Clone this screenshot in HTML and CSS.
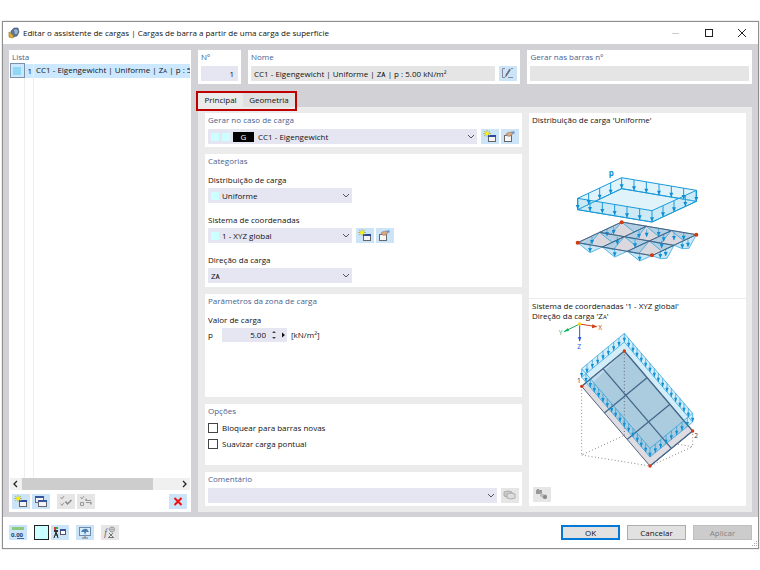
FILE: index.html
```html
<!DOCTYPE html>
<html lang="pt">
<head>
	<meta charset="UTF-8">
	<meta name="viewport" content="width=device-width, initial-scale=1.0">
	<title>Editar o assistente de cargas</title>
	<link rel="stylesheet" href="styles.css">
</head>
<body>
	<svg class="defs" aria-hidden="true">
		<symbol id="i-new" viewBox="0 0 18 15">
			<rect x="7.5" y="6.5" width="7" height="6" fill="#f4f4f4" stroke="#666"/>
			<path d="M7 6h8v2H7z" fill="#2b4a9b"/>
			<path d="M6 1v7M2 4.5h8M3 2l6 5M9 2L3 7" stroke="#a3a637" stroke-width=".7"/>
			<circle cx="6" cy="4.5" r="1.800" fill="#fff200"/>
		</symbol>
		<symbol id="i-edit" viewBox="0 0 18 15">
			<rect x="3.5" y="6.5" width="7" height="6" fill="#f6f6f6" stroke="#666"/>
			<path d="M3 6h8v1H3z" fill="#6c6c7c"/>
			<path d="M5 6l1-2 4-1 2 1-1 2-3 1.500z" fill="#d9a984" stroke="#8a6a50" stroke-width=".5"/>
			<path d="M10 3l3-1 1 2.500-3 0z" fill="#6f95d0"/>
		</symbol>
		<symbol id="i-down" viewBox="0 0 8 6">
			<path d="M1 1l3 3 3-3" fill="none" stroke="#555"/>
		</symbol>
	</svg>

	<div class="window">
		<header class="titlebar">
			<svg class="app-icon" viewBox="0 0 12 12" aria-hidden="true">
				<path d="M3 4l3-3 4 0 1 4-2 4-4 1-2-3z" fill="#5d7698" stroke="#3a4f70" stroke-width=".6"/>
				<path d="M6 3l2-1 2 2-1 3-2 0z" fill="#9cb4d0"/>
				<path d="M1 5l3 2 2 3-2 1-3-1z" fill="#e0b030" stroke="#8a6a20" stroke-width=".6"/>
			</svg>
			<h1>Editar o assistente de cargas | Cargas de barra a partir de uma carga de superfície</h1>
			<div class="win-buttons">
				<button type="button" aria-label="Minimizar" disabled><svg viewBox="0 0 10 10"><path d="M1 5.5h7" stroke="#ccc"/></svg></button>
				<button type="button" aria-label="Maximizar"><svg viewBox="0 0 10 10"><rect x="1.5" y="1.5" width="7" height="7" fill="none" stroke="#222"/></svg></button>
				<button type="button" aria-label="Fechar"><svg viewBox="0 0 10 10"><path d="M1 1l8 8M9 1L1 9" stroke="#222"/></svg></button>
			</div>
		</header>

		<main class="body">
			<section class="panel list">
				<h2>Lista</h2>
				<div class="list-area">
					<table>
						<tr>
							<td class="mark"><span></span></td>
							<td class="num">1</td>
							<td>CC1 - Eigengewicht | Uniforme | Z<small>A</small> | p : 5.00 kN/m²</td>
						</tr>
						<tr class="rest"><td></td><td></td><td></td></tr>
					</table>
				</div>
				<div class="scrollbar">
					<svg viewBox="0 0 12 12"><path d="M7 3L4 6l3 3" fill="none" stroke="#222" stroke-width="1.3"/></svg>
					<div class="track"><div class="thumb"></div></div>
					<svg viewBox="0 0 12 12"><path d="M5 3l3 3-3 3" fill="none" stroke="#222" stroke-width="1.3"/></svg>
				</div>
				<div class="list-tools">
					<button type="button" class="icon-btn" aria-label="Novo"><svg><use href="#i-new"/></svg></button>
					<button type="button" class="icon-btn" aria-label="Copiar">
						<svg viewBox="0 0 18 15">
							<rect x="3.5" y="2.5" width="8" height="6" fill="#f4f4f4" stroke="#667"/>
							<path d="M3 2h9v2H3z" fill="#3a549b"/>
							<rect x="6.5" y="6.5" width="8" height="6" fill="#f4f4f4" stroke="#667"/>
							<path d="M6 6h9v2H6z" fill="#3a549b"/>
						</svg>
					</button>
					<button type="button" class="icon-btn gap" aria-label="Selecionar tudo" disabled>
						<svg viewBox="0 0 18 15">
							<path d="M3.5 3l1.5 2 2-3M3.500 9.500l1.500 2 2-3" fill="none" stroke="#999"/>
							<path d="M8.5 7.5l2 2.500 4-4" fill="none" stroke="#888" stroke-width="1.500"/>
						</svg>
					</button>
					<button type="button" class="icon-btn" aria-label="Inverter seleção" disabled>
						<svg viewBox="0 0 18 15">
							<path d="M3.5 3l1.5 2 2-3M3.500 8.500h3v3h-3z" fill="none" stroke="#999"/>
							<path d="M9 4.500v2h5M14 10.500v-2H9M10 5l-2 1.500M13 10l2-1.500" fill="none" stroke="#999"/>
						</svg>
					</button>
					<button type="button" class="icon-btn delete" aria-label="Eliminar">
						<svg viewBox="0 0 18 15"><path d="M5.500 4l7 7M12.500 4l-7 7" stroke="#f01010" stroke-width="2"/></svg>
					</button>
				</div>
			</section>

			<div class="editor">
				<div class="top-row">
					<section class="panel no">
						<h2><label for="no">Nº</label></h2>
						<input id="no" class="field right" type="text" value="1">
					</section>
					<section class="panel name">
						<h2><label for="name">Nome</label></h2>
						<div class="line">
							<input id="name" class="field locked" type="text" value="CC1 - Eigengewicht | Uniforme | Zᴀ | p : 5.00 kN/m²" readonly>
							<button type="button" class="icon-btn" aria-label="Editar nome">
								<svg viewBox="0 0 18 15">
									<path d="M6 2.5H3.500v9H6M9 11.500h5M12 2.500h2" fill="none" stroke="#889"/>
									<path d="M6.500 11l.5-2.500 3.500-5.500 1 .7-3.500 5.500z" fill="#667" stroke="#556" stroke-width=".4"/>
								</svg>
							</button>
						</div>
					</section>
					<section class="panel bars">
						<h2><label for="bars">Gerar nas barras nº</label></h2>
						<input id="bars" class="field locked" type="text" readonly>
					</section>
				</div>

				<div class="tabs" role="tablist">
					<button type="button" role="tab" aria-selected="true">Principal</button>
					<button type="button" role="tab" aria-selected="false">Geometria</button>
				</div>

				<div class="tab-page">
					<div class="forms">
						<section class="panel">
							<h2><label for="case">Gerar no caso de carga</label></h2>
							<div class="line">
								<div class="combo">
									<span class="swatch"></span><span class="swatch"></span><span class="tag">G</span>
									<select id="case"><option>CC1 - Eigengewicht</option></select>
									<svg class="down"><use href="#i-down"/></svg>
								</div>
								<button type="button" class="icon-btn" aria-label="Novo caso"><svg><use href="#i-new"/></svg></button>
								<button type="button" class="icon-btn" aria-label="Editar caso"><svg><use href="#i-edit"/></svg></button>
							</div>
						</section>

						<section class="panel categories">
							<h2>Categorias</h2>
							<div class="item">
								<label for="dist">Distribuição de carga</label>
								<div class="combo short">
									<span class="swatch"></span>
									<select id="dist"><option>Uniforme</option></select>
									<svg class="down"><use href="#i-down"/></svg>
								</div>
							</div>
							<div class="item">
								<label for="coord">Sistema de coordenadas</label>
								<div class="line">
									<div class="combo short">
										<span class="swatch"></span>
										<select id="coord"><option>1 - XYZ global</option></select>
										<svg class="down"><use href="#i-down"/></svg>
									</div>
									<button type="button" class="icon-btn" aria-label="Novo sistema"><svg><use href="#i-new"/></svg></button>
									<button type="button" class="icon-btn" aria-label="Editar sistema"><svg><use href="#i-edit"/></svg></button>
								</div>
							</div>
							<div class="item">
								<label for="dir">Direção da carga</label>
								<div class="combo short">
									<select id="dir"><option>Zᴀ</option></select>
									<svg class="down"><use href="#i-down"/></svg>
								</div>
							</div>
						</section>

						<section class="panel params">
							<h2>Parâmetros da zona de carga</h2>
							<div class="item">
								<span>Valor de carga</span>
								<div class="value-line">
									<label for="p">p</label>
									<div class="spin">
										<input id="p" type="text" value="5.00">
										<svg viewBox="0 0 16 14"><path d="M2 5l2-2 2 2zM2 9l2 2 2-2z" fill="#444"/><path d="M12 4.500l3 2.500-3 2.500z" fill="#111"/></svg>
									</div>
									<span>[kN/m²]</span>
								</div>
							</div>
						</section>

						<section class="panel options">
							<h2>Opções</h2>
							<label><input type="checkbox">Bloquear para barras novas</label>
							<label><input type="checkbox">Suavizar carga pontual</label>
						</section>

						<section class="panel">
							<h2><label for="comment">Comentário</label></h2>
							<div class="line">
								<div class="combo">
									<select id="comment"><option></option></select>
									<svg class="down"><use href="#i-down"/></svg>
								</div>
								<button type="button" class="icon-btn" aria-label="Comentários" disabled>
									<svg viewBox="0 0 18 15">
										<path d="M3 4q4-2 8 0v4q-4 2-8 0z" fill="#ccc" stroke="#999" stroke-width=".7"/>
										<path d="M6 6q4-2 8 0v4q-4 2-8 0z" fill="#ddd" stroke="#999" stroke-width=".7"/>
									</svg>
								</button>
							</div>
						</section>
					</div>

					<div class="previews">
						<section class="preview">
							<p>Distribuição de carga 'Uniforme'</p>
							<svg class="draw-dist" viewBox="25 0 420 330" role="img" aria-label="Carga uniforme">
								<defs>
									<marker id="load" markerUnits="userSpaceOnUse" markerWidth="14" markerHeight="34" refX="7" refY="0">
										<path d="M7 0v33" stroke="#1a9ada" stroke-width="3"/>
										<path d="M1 20h12L7 33z" fill="#0f8fd6"/>
									</marker>
									<marker id="down" markerUnits="userSpaceOnUse" markerWidth="12" markerHeight="25" refX="6" refY="0">
										<path d="M6 0v22" stroke="#1a9ada" stroke-width="2"/>
										<path d="M0 10h12L6 23z" fill="#0f8fd6"/>
									</marker>
								</defs>
								<text x="147" y="48" class="load-name">p</text>
								<g fill="#9ad6ef" fill-opacity=".3" stroke="#1a9ada" stroke-width="3">
									<path d="M54 115L186 53 410 91V124L186 86 54 149z"/>
									<path d="M54 149L186 86 410 124 277 186z"/>
									<path d="M54 115L277 152 410 91V124L277 186 54 149z"/>
								</g>
								<polyline class="arrows" points="87,100 87,100 120,84 153,69 186,53 223,59 260,66 298,72 335,78 372,85 410,91 410,91"/>
								<polyline class="arrows" points="54,115 54,115 91,121 128,127 165,133 202,140 240,146 277,152 310,137 343,122 377,106 377,106"/>
								<path d="M54 248L186 186 410 224 277 287z" fill="#dad7df"/>
								<g fill="#7dc4e6" fill-opacity=".4" stroke="#1a9ada" stroke-width="2">
									<path d="M186 186l37 30 37-17 37 30 38-17 37 30 38-18z"/>
									<path d="M120 217l37 30 37-17 37 30 38-17 37 30 37-17z"/>
									<path d="M54 248l33 7 33-38 33 7 33-38z"/>
									<path d="M128 261l33 8 33-39 33 8 33-39z"/>
									<path d="M203 274l33 8 33-39 33 8 33-39z"/>
									<path d="M277 287l25 9 20-1 21-39 25 10 20-1 22-41z"/>
									<path d="M54 248l37 30 37-17 37 30 38-17 37 29 37-16z"/>
								</g>
								<polyline class="arrows small" points="91,254 91,254 165,267 240,280 302,272 318,266 368,243 385,238 385,238"/>
								<polyline class="arrows small" points="97,230 97,230 142,206 162,200 173,231 226,240 238,212 261,208 297,206 306,242 312,222 343,218 372,217 372,217"/>
								<path d="M54 248L186 186 410 224 277 287zM120 217L343 256M128 261L260 199M203 274L335 212" fill="none" stroke="#50607c" stroke-width="3"/>
								<g fill="#d23a12"><circle cx="186" cy="187" r="6"/><circle cx="54" cy="248" r="6"/><circle cx="277" cy="286" r="6"/><circle cx="410" cy="224" r="6"/></g>
							</svg>
						</section>
						<section class="preview">
							<p>Sistema de coordenadas '1 - XYZ global'<br>Direção da carga 'Z<small>A</small>'</p>
							<svg class="draw-axes" viewBox="39 93 600 465" role="img" aria-label="Direção da carga no sistema global">
								<defs>
									<marker id="tick" markerUnits="userSpaceOnUse" markerWidth="10" markerHeight="28" refX="5" refY="0">
										<path d="M5 0v26" stroke="#1a9ada" stroke-width="2"/>
										<path d="M0 13h10L5 26z" fill="#0f8fd6"/>
									</marker>
								</defs>
								<path d="M170 286V492L298 433 503 467V420M170 492L375 525 503 467" fill="none" stroke="#888" stroke-width="3" stroke-dasharray="3 7"/>
								<path d="M298 180L170 286 375 525 503 420z" fill="#dedbe1" stroke="#50607c" stroke-width="3"/>
								<path d="M298 127L503 367V393L375 498 170 259V233z" fill="#a8dbf3" fill-opacity=".5"/>
								<path d="M298 180L193 286 375 498 490 405z" fill="#8fb8d0" fill-opacity=".45"/>
								<path d="M298 180V433" stroke="#667" stroke-width="3" stroke-dasharray="3 7"/>
								<path d="M298 180L503 420 375 525M298 180L170 286M234 233L439 472M238 366L366 260M307 445L435 340" fill="none" stroke="#46688a" stroke-width="4"/>
								<path d="M298 127L170 233 375 472 503 367zM298 153L170 259 375 498 503 393z" fill="none" stroke="#1a9ada" stroke-width="2"/>
								<polyline class="ticks" points="298,127 298,127 282,140 266,153 250,167 234,180 218,193 202,206 186,220 170,233 183,248 196,263 208,278 221,293 234,308 247,323 260,338 272,352 285,367 298,382 311,397 324,412 337,427 349,442 362,457 375,472 375,472"/>
								<polyline class="ticks" points="311,142 311,142 324,157 336,172 349,187 362,202 375,217 388,232 400,247 413,262 426,277 439,292 452,307 465,322 477,337 490,352 503,367 487,380 471,393 455,406 439,420 423,433 407,446 391,459 391,459"/>
								<g fill="#d23a12"><circle cx="298" cy="180" r="5"/><circle cx="170" cy="286" r="5"/><circle cx="375" cy="525" r="5"/><circle cx="503" cy="420" r="5"/></g>
								<g stroke-width="3">
									<path d="M164 99l51 8" stroke="#d23a12"/><path d="M202 100l14 7-15 5z" fill="#d23a12"/>
									<path d="M164 99l-47 23" stroke="#19b060"/><path d="M129 111l-13 11 16-2z" fill="#19b060"/>
									<path d="M164 99v50" stroke="#2458d8"/><path d="M159 138h10l-5 14z" fill="#2458d8"/>
								</g>
								<circle cx="164" cy="99" r="5" fill="#ffd21a"/>
								<g class="axis-names">
									<text x="220" y="117" fill="#d23a12">X</text>
									<text x="101" y="131" fill="#19b060">Y</text>
									<text x="157" y="174" fill="#2458d8">Z</text>
									<text x="156" y="277" fill="#334">1</text>
									<text x="508" y="441" fill="#334">2</text>
								</g>
							</svg>
							<button type="button" class="icon-btn corner" aria-label="Imagem" disabled>
								<svg viewBox="0 0 18 15"><path d="M3 3h6v4H3zM4 2h2v1H4z" fill="#999"/><path d="M7 6l3 1 4 1v3l-3 1-4-3z" fill="#bbb"/><circle cx="12" cy="10" r="2" fill="#888"/></svg>
							</button>
						</section>
					</div>
				</div>
			</div>
		</main>

		<footer class="footer">
			<button type="button" class="icon-btn" aria-label="Unidades">
				<svg viewBox="0 0 18 15"><path d="M3 2h12v3H3z" fill="#8cc97c"/><text x="2" y="12" class="digits">0.00</text><path d="M8 13.500h7" stroke="#4a62a8"/></svg>
			</button>
			<button type="button" class="color-btn" aria-label="Cor"></button>
			<button type="button" class="icon-btn" aria-label="Opções de visualização">
				<svg viewBox="0 0 18 15">
					<path d="M3 2h2v3H3z" fill="#d33"/><path d="M5 2h2v2H5z" fill="#3a3"/><path d="M3 5h4v2H3z" fill="#333"/>
					<path d="M3 13l2-6 2 6M4 10h3" fill="none" stroke="#222"/>
					<rect x="9.500" y="4.500" width="5" height="5" fill="#fff" stroke="#556"/><path d="M9 4h6v2H9z" fill="#3a549b"/>
				</svg>
			</button>
			<button type="button" class="icon-btn wide" aria-label="Vista">
				<svg viewBox="0 0 18 15">
					<rect x="3.5" y="2.5" width="11" height="8" fill="#d8ecfa" stroke="#6f8ba8"/>
					<path d="M5 7q2-4 6-3l2 3-3 0-1 3-1-3z" fill="#4d7fae"/><path d="M6 13h6M9 11v2" stroke="#777"/>
				</svg>
			</button>
			<button type="button" class="icon-btn wide" aria-label="Fórmula" disabled>
				<svg viewBox="0 0 18 15"><text x="3" y="11" class="fx">f</text><path d="M8 8l4 4M12 8l-4 4M7 12.500h6" stroke="#777"/><circle cx="11" cy="4.5" r="2.500" fill="none" stroke="#999"/><path d="M8 4.500h6M11 2v5" stroke="#999" stroke-width=".7"/></svg>
			</button>
			<div class="dialog-buttons">
				<button type="button" class="btn primary">OK</button>
				<button type="button" class="btn">Cancelar</button>
				<button type="button" class="btn" disabled>Aplicar</button>
			</div>
			<svg class="grip" viewBox="0 0 6 6"><path d="M4 0h1v1H4zM2 2h1v1H2zM4 2h1v1H4zM0 4h1v1H0zM2 4h1v1H2zM4 4h1v1H4z" fill="#aaa"/></svg>
		</footer>
	</div>
</body>
</html>
```
FILE: styles.css
```css
* {
	box-sizing: border-box;
}

body {
	margin: 0;
	padding: 21px 1px 21px 2px;
	background-color: #fff;
	color: #111;
	font-family: "Open Sans", "Noto Sans", sans-serif;
	font-size: 8px;
	line-height: 12px;
}

h1, h2, p {
	margin: 0;
	font-size: 8px;
	font-weight: normal;
}

small {
	font-size: 6px;
}

button, input, select {
	margin: 0;
	padding: 0;
	border: none;
	border-radius: 0;
	background: none;
	color: inherit;
	font: inherit;
}

svg {
	display: block;
}

.defs {
	position: absolute;
	width: 0;
	height: 0;
}

/* window */
.window {
	position: relative;
	display: flex;
	flex-direction: column;
	min-height: calc(100vh - 42px);
	border: 1px solid #8f8f8f;
	background-color: #fff;
	box-shadow: 0 0 1px #999;
}

.titlebar {
	display: flex;
	align-items: center;
	height: 22px;
	padding-left: 5px;
}

.app-icon {
	width: 12px;
	height: 12px;
	margin-right: 3px;
}

.win-buttons {
	display: flex;
	margin-left: auto;
}

.win-buttons button {
	display: flex;
	justify-content: center;
	width: 33px;
}

.win-buttons svg {
	width: 10px;
	height: 10px;
}

.body {
	display: flex;
	flex: 1;
	gap: 7px;
	padding: 6px 6px 5px;
	background-color: #d1d1d6;
}

.panel {
	padding: 0 3px 3px;
	background-color: #fff;
}

h2 {
	height: 13px;
	margin-bottom: 3px;
	color: #4a628f;
	line-height: 14px;
}

.field {
	display: block;
	width: 100%;
	height: 15px;
	padding: 0 3px;
	background-color: #e6e6f2;
}

.locked {
	background-color: #e5e5e5;
}

.right {
	padding-right: 4px;
	text-align: right;
}

.line {
	display: flex;
	gap: 2px;
}

.line > :first-child {
	margin-right: 2px;
}

.icon-btn {
	flex: none;
	width: 18px;
	height: 15px;
	background-color: #cce4f7;
}

.icon-btn svg {
	width: 18px;
	height: 15px;
}

.icon-btn:disabled {
	background-color: #e6e6e6;
}

/* list */
.list {
	display: flex;
	flex: none;
	flex-direction: column;
	width: 182px;
	padding: 0 1px 3px;
}

.list h2 {
	margin: 0;
	padding-left: 2px;
}

.list-area {
	display: flex;
	flex: 1;
	overflow: hidden;
}

table {
	width: 100%;
	border-collapse: collapse;
	table-layout: fixed;
}

td {
	height: 14px;
	padding: 0 0 0 2px;
	border-right: 1px solid #eee;
	background-color: #cce8ff;
	overflow: hidden;
	white-space: nowrap;
}

td:last-child {
	border-right: none;
}

td.mark {
	width: 14px;
	padding: 0 2px;
	border: 1px solid #7a93a8;
}

.mark span {
	display: block;
	width: 8px;
	height: 8px;
	background-color: #8fd8f5;
}

td.num {
	width: 9px;
	padding: 0 1px 0 0;
	text-align: right;
}

.rest td {
	height: auto;
	background-color: #fff;
}

.scrollbar {
	display: flex;
	height: 12px;
	background-color: #f0f0f0;
}

.scrollbar svg {
	width: 12px;
	height: 12px;
}

.track {
	flex: 1;
}

.thumb {
	width: 84%;
	height: 12px;
	background-color: #cdcdcd;
}

.list-tools {
	display: flex;
	gap: 2px;
	margin-top: 4px;
	padding: 0 3px 0 2px;
}

.gap {
	margin-left: 5px;
}

.delete {
	margin-left: auto;
}

/* editor */
.editor {
	display: flex;
	flex: 1;
	flex-direction: column;
	min-width: 0;
}

.top-row {
	display: flex;
	gap: 7px;
}

.no {
	flex: none;
	width: 43px;
}

.name {
	flex: 273;
}

.bars {
	flex: 224;
}

.tabs {
	position: relative;
	display: flex;
	align-self: flex-start;
	height: 15px;
	margin-top: 8px;
}

.tabs button {
	width: 52px;
	background-color: #e0e0e0;
	font-weight: 500;
}

.tabs button[aria-selected="true"] {
	width: 45px;
	background-color: #ebebeb;
}

.tabs::after {
	content: "";
	position: absolute;
	inset: -1px -2px -4px -2px;
	border: 2px solid #c00000;
	pointer-events: none;
}

.tab-page {
	display: flex;
	flex: 1;
	gap: 7px;
	padding: 6px 6px 6px 7px;
	background-color: #ebebeb;
}

.forms {
	display: flex;
	flex: 317;
	flex-direction: column;
	gap: 7px;
}

.combo {
	position: relative;
	display: flex;
	flex: 1;
	align-items: center;
	height: 15px;
	padding-left: 3px;
	background-color: #e6e6f2;
}

.short {
	flex: none;
	width: 144px;
}

.combo select {
	flex: 1;
	height: 15px;
	appearance: none;
}

.swatch {
	width: 8px;
	height: 8px;
	margin-right: 3px;
	background-color: #ccffff;
}

.tag {
	width: 21px;
	height: 10px;
	margin-right: 4px;
	background-color: #000;
	color: #fff;
	line-height: 10px;
	text-align: center;
}

.down {
	position: absolute;
	top: 5px;
	right: 2px;
	width: 8px;
	height: 6px;
	pointer-events: none;
}

.categories,
.params {
	display: flex;
	flex-direction: column;
	gap: 11px;
	padding-bottom: 4px;
}

.categories h2,
.params h2 {
	margin-bottom: -4px;
}

.item > label,
.item > span {
	display: block;
	margin-bottom: 2px;
}

.params {
	flex: 1;
}

.value-line {
	display: flex;
	align-items: center;
}

.value-line label {
	width: 14px;
}

.spin {
	display: flex;
	width: 65px;
	height: 14px;
	margin-right: 4px;
	background-color: #e6e6f2;
}

.spin input {
	width: 44px;
	text-align: right;
}

.spin svg {
	width: 16px;
	height: 14px;
	margin-left: 4px;
}

.options {
	padding-bottom: 13px;
}

.options label {
	display: flex;
	align-items: center;
	height: 16px;
}

input[type="checkbox"] {
	width: 10px;
	height: 10px;
	margin-right: 4px;
	border: 1px solid #444;
	background-color: #fff;
	appearance: none;
}

/* previews */
.previews {
	display: flex;
	flex: 217;
	flex-direction: column;
	gap: 1px;
}

.preview {
	display: flex;
	flex: 1;
	flex-direction: column;
	background-color: #fff;
}

.preview:first-child {
	flex: none;
	height: 185px;
}

.preview p {
	padding: 2px 3px 0;
	line-height: 10px;
}

.preview:first-child p {
	margin-bottom: 35px;
}

.draw-dist {
	align-self: center;
	width: 140px;
	height: 110px;
}

.draw-axes {
	align-self: center;
	width: 200px;
	height: 155px;
}

.arrows,
.ticks {
	fill: none;
	marker-mid: url(#load);
}

.small {
	marker-mid: url(#down);
}

.ticks {
	marker-mid: url(#tick);
}

.load-name {
	fill: #0f8fd6;
	font-size: 24px;
	font-weight: bold;
}

.axis-names {
	font-size: 20px;
}

.corner {
	margin: auto 0 4px 4px;
}

/* footer */
.footer {
	display: flex;
	align-items: center;
	height: 31px;
	padding: 0 6px;
}

.color-btn {
	width: 15px;
	height: 15px;
	margin: 0 2px 0 7px;
	border: 1px solid #222;
	background-color: #ccffff;
}

.wide {
	margin-left: 7px;
}

.digits {
	fill: #223a7a;
	font-size: 6px;
	font-weight: bold;
}

.fx {
	fill: #777;
	font-family: "Liberation Serif", serif;
	font-size: 11px;
	font-style: italic;
}

.dialog-buttons {
	display: flex;
	gap: 7px;
	margin-left: auto;
}

.btn {
	width: 59px;
	height: 15px;
	border: 1px solid #adadad;
	background-color: #e1e1e1;
}

.primary {
	border: 1px solid #0078d7;
	outline: 1px solid #0078d7;
	outline-offset: -2px;
}

.btn:disabled {
	border-color: #bfbfbf;
	background-color: #ccc;
	color: #838383;
}

.grip {
	position: absolute;
	right: 0;
	bottom: 1px;
	width: 6px;
	height: 6px;
}
```
